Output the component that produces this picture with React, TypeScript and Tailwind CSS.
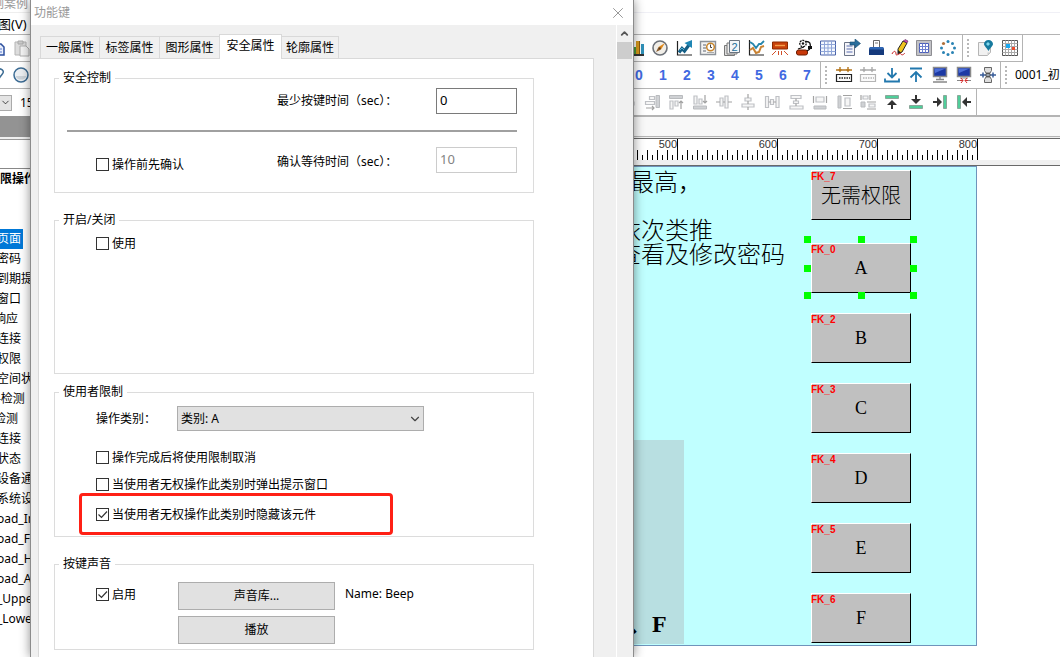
import { useState } from 'react';
import type { ReactNode } from 'react';
import clsx from 'clsx';
import { ChevronDown, ChevronUp, X } from 'lucide-react';

const tabs = ['一般属性', '标签属性', '图形属性', '安全属性', '轮廓属性'];

const treeItems = [
  { text: '页面', selected: true },
  { text: '密码' },
  { text: '到期提' },
  { text: '窗口' },
  { text: '响应', deep: true },
  { text: '连接' },
  { text: '权限' },
  { text: '空间状' },
  { text: '-检测' },
  { text: '检测', deep: true },
  { text: '连接' },
  { text: '状态' },
  { text: '设备通' },
  { text: '系统设' },
  { text: 'oad_In' },
  { text: 'oad_Fl' },
  { text: 'oad_H' },
  { text: 'oad_A' },
  { text: '_Uppe' },
  { text: '_Lowe' },
];

const keys = [
  { id: 'FK_7', label: '无需权限', place: 'top-[3px]' },
  { id: 'FK_0', label: 'A', place: 'top-[76px]', selected: true },
  { id: 'FK_2', label: 'B', place: 'top-[146px]' },
  { id: 'FK_3', label: 'C', place: 'top-[216px]' },
  { id: 'FK_4', label: 'D', place: 'top-[286px]' },
  { id: 'FK_5', label: 'E', place: 'top-[356px]' },
  { id: 'FK_6', label: 'F', place: 'top-[426px]' },
];

const handles = [
  '-left-[8px] -top-[8px]',
  'left-[46px] -top-[8px]',
  'left-[98px] -top-[8px]',
  '-left-[8px] top-[21px]',
  'left-[98px] top-[21px]',
  '-left-[8px] top-[48px]',
  'left-[46px] top-[48px]',
  'left-[98px] top-[48px]',
];

function Svg({ children, size = 18 }: { children: ReactNode; size?: number }) {
  return (
    <svg width={size} height={size} viewBox={`0 0 ${size} ${size}`} fill="none" aria-hidden="true" className="shrink-0">
      {children}
    </svg>
  );
}

const objectIcons: [string, ReactNode][] = [
  ['Bar graph', <Svg>
    <path d="M2 2v14h15" stroke="#333" strokeWidth="2" />
    <path d="M6 8h3v7H6z" fill="#4a9a3a" />
    <path d="M9 2h4v13H9z" fill="#d99a1c" /><path d="M12 2h1v13h-1z" fill="#8a5a10" />
    <path d="M14 5h3v10h-3z" fill="#2f90b8" />
  </Svg>],
  ['Meter', <Svg>
    <circle cx="9" cy="9" r="7" fill="#f1eee8" stroke="#6b7078" strokeWidth="1.6" />
    <path d="M14 4L7.500 8l2.500 2.500z" fill="#e08a1e" /><path d="M7.500 8L5 13l5-2.500z" fill="#8a5a2a" />
    <circle cx="8.800" cy="9.200" r="1" fill="#5a3a18" />
  </Svg>],
  ['Trend', <Svg>
    <path d="M2.500 2v14H17" stroke="#222" strokeWidth="1.200" />
    <path d="M4 13.500l3-4 2.500 2.500L14 6" stroke="#155f86" strokeWidth="3.200" /><path d="M17 1v8l-7.500-5z" fill="#1f86b4" />
    <path d="M5 11l2-2 2 2" stroke="#53b0d4" />
  </Svg>],
  ['Event log', <Svg>
    <path d="M1.500 2.500h15v13h-15z" fill="#f4f4f4" stroke="#8d9299" strokeWidth="1.400" />
    <path d="M4 6h3M4 9h3M4 12h3" stroke="#5c6570" /><path d="M8 13.500h7" stroke="#aaa" />
    <circle cx="11.500" cy="8" r="3.800" fill="#fff" stroke="#c8862d" strokeWidth="1.500" />
    <path d="M11.500 5.500V8.500H13" stroke="#444" />
  </Svg>],
  ['Recipe', <Svg>
    <path d="M1.500 6.500h10v10h-10z" fill="#ddd" stroke="#777" /><path d="M4 4h10v11H4z" fill="#eee" stroke="#777" />
    <path d="M6.500 1.500h10v12h-10z" fill="#f2f5f8" stroke="#6a7480" />
    <text x="8.500" y="11.500" fontSize="11" fontFamily="Liberation Sans, sans-serif" fill="#1c6f9a">2</text>
  </Svg>],
  ['Line chart', <Svg>
    <path d="M2.500 1v15H17" stroke="#222" strokeWidth="1.200" />
    <path d="M3 3l3 2 3 4 3-4 2 0 3-3" stroke="#2787ad" strokeWidth="1.800" />
    <path d="M3 11l3-2 3 5 3-1 2-5 3-1" stroke="#c98232" strokeWidth="2" />
  </Svg>],
  ['Scanner', <Svg>
    <path d="M1.500 3h15v7h-15z" fill="#c8420a" stroke="#8a2a00" /><path d="M4 6.500h10" stroke="#f4a04a" strokeWidth="1.400" />
    <path d="M5 12l-4 4M7.500 12v4M10.500 12v4M13 12l4 4" stroke="#d2502a" />
  </Svg>],
  ['Camera', <Svg>
    <circle cx="8" cy="4.500" r="3.200" fill="#fff" stroke="#111" strokeWidth="1.300" strokeDasharray="2 .8" /><circle cx="8" cy="4.500" r="1.200" fill="#111" />
    <path d="M11 2.500c4 0 5 2 4 7" stroke="#111" strokeWidth="1.300" /><path d="M13 7h4v3h-4z" fill="#111" />
    <rect x="1.500" y="11" width="11" height="5" rx="2" fill="#c8380a" stroke="#6d1c00" />
    <path d="M3 10l6-2M12 12l3-2" stroke="#111" strokeWidth="1.300" />
  </Svg>],
  ['Table', <Svg>
    <path d="M1.500 2h15v14h-15z" fill="#f4f8ff" stroke="#4a63a8" />
    <path d="M1.500 5.500h15M1.500 9h15M1.500 12.500h15M5.500 2v14M9 2v14M12.500 2v14" stroke="#8fa5d8" />
  </Svg>],
  ['Export', <Svg>
    <path d="M1.500 3.500h10v13h-10z" fill="#f6f6fa" stroke="#6b7488" /><path d="M3.500 7h6M3.500 10h6M3.500 13h6" stroke="#5b6fb0" />
    <path d="M7 3h5V0l5.500 4.500L12 9V6H7z" fill="#2a6e9c" stroke="#174a70" strokeWidth=".6" />
  </Svg>],
  ['Media', <Svg>
    <path d="M6.500 1.500h6v8h-6z" fill="#fff" stroke="#666" /><path d="M8 4h3" stroke="#777" />
    <path d="M3 8h13l1 2v6H2v-6z" fill="#153a7c" /><path d="M3 8h13l1 2.500H2z" fill="#2f66b4" />
  </Svg>],
  ['Draw', <Svg>
    <path d="M12 2l4 2-5 9-4 2v-5z" fill="#f0c31e" stroke="#222" /><path d="M12.500 2l3.500 2 1-2-3-1.500z" fill="#d04fb0" stroke="#552255" strokeWidth=".6" />
    <path d="M7 11v4l3-1.500z" fill="#222" /><path d="M1 15c2-4 4-3 4 0s4-2 5 0 3 0 4-1" stroke="#c82020" />
  </Svg>],
  ['Data grid', <Svg>
    <path d="M1.500 1.500h15v15h-15z" fill="#c2c2c6" stroke="#8d8d92" /><path d="M4.500 4.500h9v9h-9z" fill="#fff" stroke="#4d5fb8" />
    <path d="M7.500 4.500v9M10.500 4.500v9M4.500 7.500h9M4.500 10.500h9" stroke="#6d80d0" />
  </Svg>],
  ['Circle', <Svg>
    <g fill="#2a83b4">
      <circle cx="9" cy="2.500" r="1.500" /><circle cx="13.500" cy="4.500" r="1.500" /><circle cx="15.500" cy="9" r="1.500" />
      <circle cx="13.500" cy="13.500" r="1.500" /><circle cx="9" cy="15.500" r="1.500" /><circle cx="4.500" cy="13.500" r="1.500" />
      <circle cx="2.500" cy="9" r="1.500" />
    </g>
    <circle cx="4.500" cy="4.500" r="1.600" fill="#b0703a" />
  </Svg>],
];

const mapIcons: [string, ReactNode][] = [
  ['Pin', <Svg>
    <path d="M1.500 3.500h12v10l-3 3h-9z" fill="#f1f1f1" stroke="#b5b5b5" /><path d="M13.500 13.500h-3v3z" fill="#ccc" />
    <path d="M7 5c0-2 2-4 4.500-4S16 3 16 5s-3 4-4.500 7C10 9 7 7 7 5z" fill="#167a9e" /><path d="M11 3l2 2-2 2-2-2z" fill="#7fd8ee" />
  </Svg>],
  ['Address map', <Svg>
    <path d="M1.500 1.500h15v15h-15z" fill="#fff" stroke="#555" />
    <path d="M4.500 1.500v15M7.500 1.500v15M10.500 1.500v15M13.500 1.500v15M1.500 4.500h15M1.500 7.500h15M1.500 10.500h15M1.500 13.500h15" stroke="#aaa" />
    <path d="M5 5h4v4H5z" fill="#18a8f0" /><path d="M11 8h3v3h-3z" fill="#f04a2a" />
  </Svg>],
];

function Compile({ top, body }: { top: string; body: string }) {
  return (
    <Svg>
      <path d="M1 4h16M5 1v4M13 1v4" stroke={top} strokeWidth="1.400" />
      <path d="M3 3.500h4L5 6.500zM11 3.500h4l-2 3z" fill={top} />
      <path d="M1.500 8.500h15v7h-15z" fill="#fafafa" stroke={body} strokeWidth="1.200" />
      <path d="M4 12h11" stroke={body} strokeWidth="1.500" strokeDasharray="1.500 1" />
    </Svg>
  );
}

const screen = (
  <>
    <path d="M2.500 1.500h13v9h-13z" fill="#1c39a4" stroke="#8a8a8a" strokeWidth="1.500" />
    <path d="M3.500 2.500h11L4 7z" fill="#4c6fd8" />
  </>
);

const projectIcons: [string, ReactNode][] = [
  ['Compile', <Compile top="#b5761c" body="#222" />],
  ['Rebuild', <Compile top="#aaa" body="#b4b4b4" />],
  ['Download', <Svg><path d="M9 2v9M4.500 7L9 11.500 13.500 7M2 12.500v3h14v-3" stroke="#2278ae" strokeWidth="1.800" /></Svg>],
  ['Upload', <Svg><path d="M3 2.500h12" stroke="#2278ae" strokeWidth="2" /><path d="M9 16V6M3.500 11.500L9 6l5.500 5.500" stroke="#2278ae" strokeWidth="1.800" /></Svg>],
  ['Online simulation', <Svg>{screen}<path d="M9 11v2M5 13.500h8M2 16h14" stroke="#888" strokeWidth="1.300" /></Svg>],
  ['Offline simulation', <Svg>{screen}<path d="M5 12h8M2 14.500h4M12 14.500h4" stroke="#888" /><path d="M6 12l2 2.500L6 17M12 12l-2 2.500 2 2.500M5 14.500h3M10 14.500h3" stroke="#d23030" /></Svg>],
  ['Pass-through', <Svg>
    <path d="M5.500 1.500h7v3L11 7H7L5.500 4.500zM5.500 16.500h7v-3L11 11H7l-1.500 2.500z" fill="#ddd" stroke="#666" />
    <path d="M1 9h16M4 6.500v5M14 6.500v5" stroke="#385c98" strokeWidth="1.500" /><path d="M7 7.500h4v3H7z" fill="#9aa3ae" stroke="#555" />
  </Svg>],
];

// thin shapes are outlined, solid ones are the reference edge of the alignment
function Align({ solid = '', thin = '', arrow = '' }: { solid?: string; thin?: string; arrow?: string }) {
  return (
    <Svg>
      <path d={thin} fill="#f6f6f6" stroke="#bfc1c5" strokeWidth="1.200" />
      <path d={solid} fill="#cfd1d4" stroke="#b9bbbe" />
      <path d={arrow} stroke="#a2a2a2" strokeWidth="1.200" />
    </Svg>
  );
}

// bar plus arrow, used by the four "move to edge" buttons
function ToEdge({ bar, head, stem }: { bar: string; head: string; stem: string }) {
  return (
    <Svg>
      <path d={bar} fill="#4fce9a" stroke="#8aa79a" />
      <path d={head} fill="#333" />
      <path d={stem} stroke="#333" strokeWidth="2" />
    </Svg>
  );
}

const alignIcons: [string, ReactNode][] = [
  ['Align left', <Align thin="M6 3h6v4H6zM6 9h9v3H6z" solid="M2 2h3v12H2z" arrow="M5 15h9" />],
  ['Align right', <Align thin="M6.500 3.500h5v3h-5zM2.500 8.500h9v3h-9z" solid="M13 2.500h3.500v12H13z" arrow="M3 15h8M9 13l2 2-2 2" />],
  ['Align top', <Align solid="M2.500 2.500h13v3h-13z" thin="M3 8h3v8H3zM8 8h3v5H8z" arrow="M14 16V8M12 10l2-2 2 2" />],
  ['Align bottom', <Align solid="M2.500 13h13v3h-13z" thin="M3 3h3v8H3zM8 6h3v5H8z" arrow="M14 2v8M12 8l2 2 2-2" />],
  ['Center horizontally', <Align thin="M5 5h3v8H5zM10 3h3v12h-3z" arrow="M1 9h4M13 9h4M8 9h2" />],
  ['Center vertically', <Align thin="M6 5h6v3H6zM3 11h12v3H3z" arrow="M9 1v4M9 8v3M9 14v3" />],
  ['Space across', <Align thin="M2.500 3.500h3v11h-3zM7.500 6.500h3v5h-3zM13 3.500h3v11h-3z" arrow="M5.500 9h2M10.500 9h2.500" />],
  ['Space down', <Align thin="M4 2.500h10v3H4zM6.500 8h5v2.500h-5zM3 13h13v3H3z" arrow="M9 5.500V8M9 10.500V13" />],
  ['Same width', <Align thin="M5 4h8v5H5z" solid="M3 13h12v3H3z" arrow="M2.500 3v7M15.500 3v7" />],
  ['Same height', <Align solid="M3 3h3v12H3z" thin="M10 5h5v8h-5z" arrow="M8 2.500h9M8 15.500h9" />],
  ['Same size', <Align solid="M2 9h4v5H2z" thin="M4 3h5v3H4zM10 11h6v3h-6z" arrow="M2 2v5M11 2v5M8 9h9M8 16h9" />],
  ['To top', <ToEdge bar="M2.500 2.500h13v3h-13z" head="M4 12l5-5 5 5z" stem="M9 11v5" />],
  ['To bottom', <ToEdge bar="M2.500 12.500h13v3h-13z" head="M4 6l5 5 5-5z" stem="M9 2v5" />],
  ['To right', <ToEdge bar="M12.500 2.500h3v13h-3z" head="M6 4l5 5-5 5z" stem="M2 9h5" />],
  ['To left', <ToEdge bar="M2.500 2.500h3v13h-3z" head="M12 4L7 9l5 5z" stem="M16 9h-5" />],
];

function IconRow({ icons }: { icons: [string, ReactNode][] }) {
  return (
    <>
      {icons.map(([name, icon]) => (
        <button key={name} type="button" aria-label={name} className="w-6 shrink-0 flex items-center justify-center">
          {icon}
        </button>
      ))}
    </>
  );
}

function Grip() {
  return <span className="w-[3px] my-1 mx-1 shrink-0 border-l-2 border-dotted border-[#b8b8b8]" />;
}

function Check({ label, checked = false, marked = false }: { label: string; checked?: boolean; marked?: boolean }) {
  return (
    <label className="relative flex w-fit items-center gap-[3px]">
      <span className="relative flex">
        <input type="checkbox" defaultChecked={checked} className="peer appearance-none size-[13px] border border-[#333] bg-white" />
        <svg viewBox="0 0 13 13" fill="none" stroke="#333" strokeWidth="1.200" className="hidden peer-checked:block absolute inset-0 size-[13px] pointer-events-none">
          <path d="M2.500 6.500l3 3 5.500-6" />
        </svg>
      </span>
      <span className="pt-px -mb-px">{label}</span>
      {marked && <span className="absolute -left-[17px] -right-[77px] -top-[13px] -bottom-[13px] rounded border-3 border-[#ff2015] pointer-events-none" />}
    </label>
  );
}

function Group({ title, className, children }: { title: string; className?: string; children: ReactNode }) {
  return (
    <fieldset className={clsx('min-w-0 border border-[#dcdcdc] pl-3 pr-4', className)}>
      <legend className="-ml-2 px-1 leading-[14px]">{title}</legend>
      {children}
    </fieldset>
  );
}

function PushButton({ children }: { children: ReactNode }) {
  return (
    <button type="button" className="h-7 w-[157px] border border-[#adadad] bg-[#e1e1e1] hover:bg-[#e5f1fb]">
      {children}
    </button>
  );
}

function Dialog() {
  const [tab, setTab] = useState('安全属性');

  return (
    <section className="relative z-10 w-[604px] shrink-0 flex flex-col border-x border-[#8c8c8c] bg-[#f0f0f0] shadow-[0_0_10px_rgba(0,0,0,0.45)]">
      <header className="h-[25px] shrink-0 flex items-center justify-between bg-white pl-[3px] pr-[6px] text-[#999]">
        <h1>功能键</h1>
        <button type="button" aria-label="Close"><X size={18} strokeWidth={1} color="#777" /></button>
      </header>

      <div className="flex flex-1 min-h-0">
        <div className="flex-1 min-w-0 flex flex-col pl-[7px] pr-[22px] pt-[9px]">
          <div role="tablist" className="flex items-end pl-[2px] h-6 shrink-0">
            {tabs.map((t, i) => (
              <button key={t} role="tab" type="button" aria-selected={t === tab} onClick={() => setTab(t)}
                className={clsx(
                  'shrink-0 border-t border-r border-[#d9d9d9]',
                  i === 0 && 'border-l',
                  t === tab ? 'relative z-10 -mb-px -ml-px h-[25px] w-[63px] bg-white border-l pb-[3px]' : 'h-[22px] w-[60px] last:w-[57px]',
                )}>
                {t}
              </button>
            ))}
          </div>

          <div className="flex-1 border border-b-0 border-[#d9d9d9] bg-white pt-3 pl-[15px] pr-[59px]">
            <Group title="安全控制" className="pb-[19px]">
              <div className="flex items-center pl-[29px] pt-[3px]">
                <label htmlFor="press-time" className="ml-[181px]">最少按键时间（sec）：</label>
                <input id="press-time" defaultValue="0" className="ml-auto w-[81px] h-[26px] border border-[#7a7a7a] px-[3px] pb-[3px] text-[13px]" />
              </div>
              <hr className="mt-4 mb-[15px] border-0 h-[2px] bg-[#a0a0a0]" />
              <div className="flex items-center pl-[29px]">
                <div className="w-[181px] pt-2"><Check label="操作前先确认" /></div>
                <label htmlFor="wait-time" className="pt-1">确认等待时间（sec）：</label>
                <input id="wait-time" defaultValue="10" disabled className="ml-auto w-[81px] h-[26px] border border-[#ccc] px-[3px] pb-[3px] text-[13px] text-[#838383]" />
              </div>
            </Group>

            <Group title="开启/关闭" className="mt-5 min-h-[161px]">
              <div className="pl-[29px] pt-2"><Check label="使用" /></div>
            </Group>

            <Group title="使用者限制" className="mt-[11px] pb-[14px]">
              <div className="pl-[29px] pt-[7px] flex flex-col">
                <div className="flex items-center">
                  <label htmlFor="category" className="w-[81px] pt-px">操作类别：</label>
                  <span className="relative">
                    <select id="category" className="block appearance-none h-[25px] w-[247px] border border-[#adadad] bg-[#e1e1e1] px-[3px]">
                      <option>类别: A</option>
                    </select>
                    <ChevronDown size={14} strokeWidth={2} color="#444" className="absolute right-[2px] top-[6px] pointer-events-none" />
                  </span>
                </div>
                <div className="mt-[18px]"><Check label="操作完成后将使用限制取消" /></div>
                <div className="mt-[11px]"><Check label="当使用者无权操作此类别时弹出提示窗口" /></div>
                <div className="mt-[14px]"><Check label="当使用者无权操作此类别时隐藏该元件" checked marked /></div>
              </div>
            </Group>

            <Group title="按键声音" className="mt-5 pb-[5px]">
              <div className="pl-[29px] pt-[11px] flex items-start">
                <div className="w-[82px] pt-1"><Check label="启用" checked /></div>
                <div className="flex flex-col gap-[6px]">
                  <PushButton>声音库...</PushButton>
                  <PushButton>播放</PushButton>
                </div>
                <span className="ml-[10px] pt-1">Name: Beep</span>
              </div>
            </Group>
          </div>
        </div>

        <div className="w-[17px] shrink-0 border-l border-white pr-px">
          <button type="button" aria-label="Scroll up" className="h-[17px] w-full flex items-center justify-center">
            <ChevronUp size={11} strokeWidth={4} color="#555" />
          </button>
          <div className="h-[17px] bg-[#cdcdcd]" />
        </div>
      </div>
    </section>
  );
}

function LeftStrip() {
  return (
    <aside className="w-[30px] shrink-0 overflow-hidden flex flex-col whitespace-nowrap">
      <div className="h-[13px] shrink-0 border-b border-[#eee] -ml-2 leading-[7px] text-[#999]">例案例</div>
      <div className="h-[22px] shrink-0 border-b border-[#b4b4b4] -ml-[2px] flex items-center text-[13px]">图(V)</div>
      <div className="h-[27px] shrink-0 border-b border-[#b4b4b4] -ml-[13px] flex items-center gap-2">
        <Svg>
          <path d="M7 5h7l3 3v8H7z" fill="#e8eefb" stroke="#2c4f9e" strokeWidth="1.500" /><path d="M9 10h6M9 13h6" stroke="#5a7ad0" />
        </Svg>
        <Svg>
          <path d="M2 3h11v13H2z" fill="#ddd" stroke="#b5b5b5" /><path d="M5 2h5v3H5z" fill="#ccc" stroke="#aaa" />
          <path d="M7 7h6l3 3v7H7z" fill="#f4f4f4" stroke="#b0b0b0" />
        </Svg>
      </div>
      <div className="h-[27px] shrink-0 border-b border-[#b4b4b4] -ml-[13px] flex items-center gap-2">
        <Svg>
          <path d="M10 3c5-1 7 2 6 4-1 2-3 3-4 6" stroke="#3c6c94" strokeWidth="1.500" />
        </Svg>
        <Svg>
          <circle cx="8" cy="9" r="7" fill="#eceff2" stroke="#3c6c94" strokeWidth="1.500" />
          <path d="M2.500 10a6 6 0 0011 0z" fill="#ccd3d9" />
        </Svg>
      </div>
      <div className="h-[27px] shrink-0 flex items-center gap-2">
        <span className="w-3 h-4 border border-l-0 border-[#aaa] bg-[#e4e4e4] flex items-center justify-end">
          <ChevronDown size={11} strokeWidth={1.500} />
        </span>
        15
      </div>
      <div className="h-[21px] shrink-0 bg-[#939393]" />
      <div className="h-[3px] shrink-0 border-b border-[#999] bg-[#f0f0f0]" />
      <div className="h-[29px] shrink-0 border-b border-[#888]" />
      <div className="h-[60px] shrink-0 font-bold leading-5">限操作</div>
      <ul>
        {treeItems.map((item, i) => (
          <li key={i} className={clsx('h-5 leading-5 w-fit', item.deep ? '-ml-[6px]' : '-ml-[3px]', item.selected && 'bg-[#0078d7] text-white pr-[2px]')}>
            {item.text}
          </li>
        ))}
      </ul>
    </aside>
  );
}

// ticks every 5px, a longer one every 10px
function RulerSegment({ value }: { value: number }) {
  const ticks = Array.from({ length: 19 }, (_, i) => 4 + i * 5);
  return (
    <div className="w-[100px] shrink-0 border-r border-black flex flex-col justify-between items-end">
      <span className="text-[11px] leading-[10px] text-[#333] font-['Liberation_Sans',sans-serif]">{value}</span>
      <svg width="99" height="10" shapeRendering="crispEdges" aria-hidden="true">
        {ticks.map((x, i) => <rect key={x} x={x} y={i % 2 ? 0 : 5} width="1" height={i % 2 ? 10 : 5} fill="#000" />)}
      </svg>
    </div>
  );
}

function Canvas() {
  return (
    <div className="relative w-[343px] h-[480px] overflow-hidden border border-l-0 border-[#6f94bb] bg-[#c0ffff] whitespace-nowrap text-2xl leading-6 font-light">
      <p className="absolute -left-1 top-[3px]">最高，</p>
      <p className="absolute -left-[17px] top-[51px]">依次类推<br />查看及修改密码</p>
      <div className="absolute left-0 top-[273px] h-[204px] w-[50px] bg-[#b8dfe1]">
        <p className="absolute -left-[6px] bottom-2 font-bold font-['Liberation_Serif','Noto_Sans_CJK_SC',serif]">、F</p>
      </div>
      {keys.map((k) => (
        <button key={k.id} type="button"
          className={clsx('absolute left-[177px] w-[100px] h-[50px] border border-t-white border-l-white border-b-black border-r-black bg-[#c0c0c0] font-light', k.place,
            k.label.length === 1 ? "text-lg font-['Liberation_Serif',serif]" : "text-xl font-['Noto_Sans_CJK_SC',sans-serif]")}>
          <span className="absolute -left-px top-0 text-[10px] leading-3 font-bold text-[#ff0000] font-['Liberation_Sans',sans-serif]">{k.id}</span>
          {k.label}
          {k.selected && handles.map((h) => <i key={h} className={clsx('absolute size-[7px] bg-[#00ff00]', h)} />)}
        </button>
      ))}
    </div>
  );
}

function Workspace() {
  return (
    <main className="flex-1 min-w-0 overflow-hidden flex flex-col">
      <div className="h-[13px] shrink-0 border-b border-[#f0f0f6]" />
      <div className="h-[22px] shrink-0 border-b border-[#b4b4b4]" />
      <div className="h-[27px] shrink-0 flex">
        <div className="flex border-b border-r border-[#b4b4b4] -ml-[10px] pr-[2px]"><IconRow icons={objectIcons} /></div>
        <div className="flex border-b border-r border-[#b4b4b4]">
          <Grip />
          <IconRow icons={mapIcons} />
        </div>
      </div>
      <div className="h-[27px] shrink-0 flex border-b border-[#b4b4b4] whitespace-nowrap">
        <div className="flex border-r border-[#b4b4b4] -ml-[7px] pr-px">
          {[0, 1, 2, 3, 4, 5, 6, 7].map((n) => (
            <button key={n} type="button" className="w-6 text-sm font-bold text-[#4169e1] font-['Liberation_Sans',sans-serif]">{n}</button>
          ))}
        </div>
        <div className="flex border-r border-[#b4b4b4]">
          <Grip />
          <IconRow icons={projectIcons} />
        </div>
        <Grip />
        <span className="self-center pl-[3px]">0001_初始</span>
      </div>
      <div className="h-7 shrink-0 flex border-b-2 border-[#b4b4b4]">
        <div className="flex border-r border-[#b4b4b4] -ml-[18px]"><IconRow icons={alignIcons} /></div>
      </div>
      <div className="h-5 shrink-0 border-b border-[#b4b4b4] bg-[#f8f8f8]" />
      <div className="h-[2px] shrink-0 border-b border-[#696969] bg-[#f0f0f0]" />
      <div className="h-[21px] shrink-0 w-[344px] flex justify-end overflow-hidden">
        {[500, 600, 700, 800].map((v) => <RulerSegment key={v} value={v} />)}
      </div>
      <div className="h-[6px] shrink-0 border-b border-[#696969] bg-[#f0f0f0]" />
      <Canvas />
    </main>
  );
}

export default function App() {
  return (
    <div className="h-screen flex overflow-hidden bg-white text-black text-xs leading-4 font-['Noto_Sans','Noto_Sans_CJK_SC',sans-serif]">
      <LeftStrip />
      <Dialog />
      <Workspace />
    </div>
  );
}
